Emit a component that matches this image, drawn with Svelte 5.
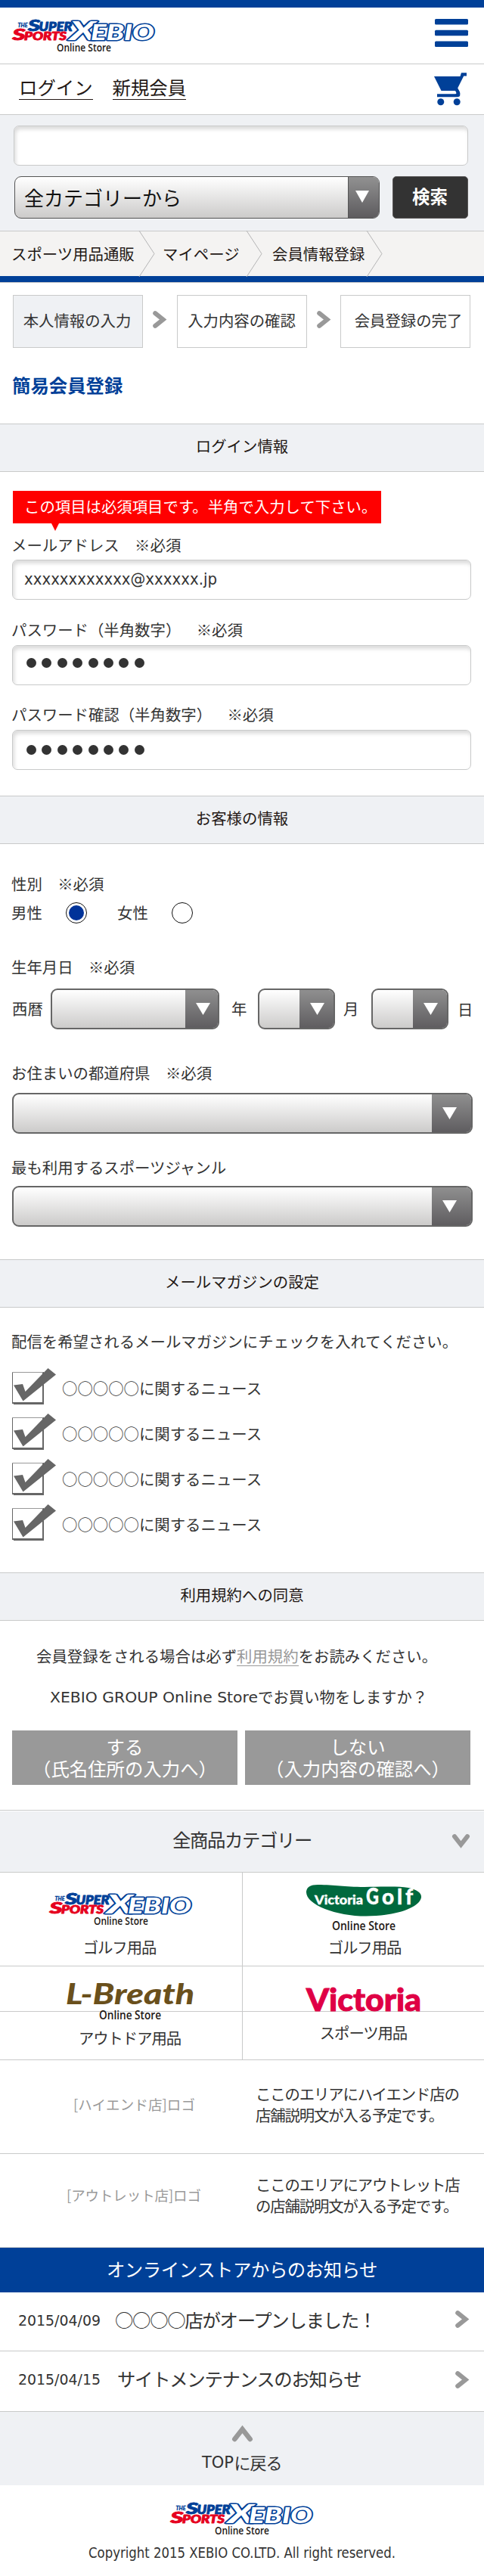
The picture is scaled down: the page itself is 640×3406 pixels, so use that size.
<script>
  const crumbs = [
    { label: 'スポーツ用品通販', width: 205 },
    { label: 'マイページ', width: 142 },
    { label: '会員情報登録', width: 159 },
  ];
  const steps = ['本人情報の入力', '入力内容の確認', '会員登録の完了'];
  const newsletters = [1, 2, 3, 4];
  const dots = [0, 1, 2, 3, 4, 5, 6, 7];
  const stores = [
    { logo: '[ハイエンド店]ロゴ', lines: ['ここのエリアにハイエンド店の', '店舗説明文が入る予定です。'], w: 161 },
    { logo: '[アウトレット店]ロゴ', lines: ['ここのエリアにアウトレット店', 'の店舗説明文が入る予定です。'], w: 178 },
  ];
</script>

{#snippet xebio()}
  <svg class="xebio" width="192" height="46" viewBox="0 0 192 46">
    <g font-family="Lato" font-weight="900" font-style="italic" stroke-linejoin="round">
      <text x="8.500" y="12" font-size="7" fill="#004098" stroke="#004098" stroke-width=".3" textLength="13" lengthAdjust="spacingAndGlyphs">THE</text>
      <g fill="#004098" stroke="#004098" stroke-width="1">
        <text x="22" y="16.500" font-size="21" textLength="16" lengthAdjust="spacingAndGlyphs">S</text>
        <text x="36.500" y="16.500" font-size="16.500" textLength="44" lengthAdjust="spacingAndGlyphs">UPER</text>
      </g>
      <g fill="#e60020" stroke="#e60020" stroke-width="1">
        <text x="1.500" y="29.300" font-size="20" textLength="17" lengthAdjust="spacingAndGlyphs">S</text>
        <text x="17" y="29.300" font-size="15" textLength="56" lengthAdjust="spacingAndGlyphs">PORTS</text>
      </g>
      <g fill="#fff" stroke="#004098" stroke-width="3" paint-order="stroke">
        <text x="77" y="28.500" font-size="34" textLength="35" lengthAdjust="spacingAndGlyphs">X</text>
        <text x="105" y="28.500" font-size="29" textLength="84" lengthAdjust="spacingAndGlyphs">EBIO</text>
      </g>
    </g>
    <text x="60" y="43.500" font-family="Open Sans" font-weight="600" font-size="13.500" fill="#231815" textLength="72" lengthAdjust="spacingAndGlyphs">Online Store</text>
  </svg>
{/snippet}

{#snippet arrow()}
  <svg class="arrow" width="18" height="23" viewBox="0 0 18 23">
    <path d="M3.2 3.2 L13.6 11.5 L3.2 19.8" fill="none" stroke="#999" stroke-width="6" stroke-linecap="round" />
  </svg>
{/snippet}

{#snippet select(width, handle, tri)}
  <div class="select" style="width:{width}px">
    <div class="handle" style="width:{handle}px;padding-left:{tri}px">
      <svg width="19" height="16" viewBox="0 0 19 16"><path d="M0 0H19L9.5 16Z" fill="#fff" /></svg>
    </div>
  </div>
{/snippet}

{#snippet latin(text, width, size)}
  <svg class="latin" width={width} height="30" viewBox="0 0 {width} 30">
    <text x="0" y="22" font-size={size} textLength={width} lengthAdjust="spacingAndGlyphs">{text}</text>
  </svg>
{/snippet}

<div class="page">
  <div class="topbar"></div>
  <header>
    {@render xebio()}
    <svg width="44" height="37" viewBox="0 0 44 37" fill="#004098">
      <rect width="44" height="7.5" rx="1.5" /><rect y="14.8" width="44" height="7.5" rx="1.5" /><rect y="29.5" width="44" height="7.5" rx="1.5" />
    </svg>
  </header>
  <nav>
    <a class="first">ログイン</a>
    <a>新規会員</a>
    <svg width="44" height="44" viewBox="0 0 44 44">
      <path d="M0 5H34.5L36 0.3H43V4.5H39.2L31.2 20.5L34 25.5Q35.8 32.2 31 32.2H4V28.2H28.2Q30 28.2 29.2 26L28 24H9.5Z" fill="#004098" />
      <circle cx="8.8" cy="38.8" r="4.5" fill="#004098" /><circle cx="30.2" cy="38.8" r="4.5" fill="#004098" />
    </svg>
  </nav>
  <div class="search">
    <div class="input wide"></div>
    <div class="search-row">
      <div class="select cat">
        <span>全カテゴリーから</span>
        <div class="handle">
          <svg width="18" height="16" viewBox="0 0 18 16"><path d="M0 0H18L9 16Z" fill="#fff" /></svg>
        </div>
      </div>
      <div class="go">検索</div>
    </div>
  </div>
  <div class="crumbs">
    {#each crumbs as c, i}
      <div class="crumb" class:lead={i === 0} style="width:{c.width}px">
        <span>{c.label}</span>
        <svg width="21" height="59" viewBox="0 0 21 59"><path d="M0 -1L20 29.5L0 60" fill="none" stroke="#b5b5b6" stroke-width="1" /></svg>
      </div>
    {/each}
  </div>
  <div class="bluebar"></div>

  <section class="intro">
    <div class="steps">
      {#each steps as s, i}
        {#if i > 0}{@render arrow()}{/if}
        <div class="step" class:on={i === 0} class:shift={i === 2}>{s}</div>
      {/each}
    </div>
    <h1>簡易会員登録</h1>
  </section>

  <h2>ログイン情報</h2>
  <section class="login">
    <div class="error">この項目は必須項目です。半角で入力して下さい。</div>
    <p class="label a">メールアドレス　※必須</p>
    <div class="input mail">{@render latin('xxxxxxxxxxxx@xxxxxx.jp', 255, 20.4)}</div>
    <p class="label b">パスワード（半角数字）　※必須</p>
    <div class="input pw">{#each dots as d}<i></i>{/each}</div>
    <p class="label c">パスワード確認（半角数字）　※必須</p>
    <div class="input pw low">{#each dots as d}<i></i>{/each}</div>
  </section>

  <h2>お客様の情報</h2>
  <section class="customer">
    <p class="label d">性別　※必須</p>
    <div class="genders">
      <span>男性</span><b class="radio on"></b>
      <span>女性</span><b class="radio"></b>
    </div>
    <p class="label e">生年月日　※必須</p>
    <div class="birth">
      <span class="era">西暦</span>{@render select(223, 45, 14)}
      <span class="year">年</span>{@render select(102, 47, 14)}
      <span class="month">月</span>{@render select(102, 47, 14)}
      <span class="day">日</span>
    </div>
    <p class="label f">お住まいの都道府県　※必須</p>
    {@render select(609, 54, 14)}
    <p class="label g">最も利用するスポーツジャンル</p>
    {@render select(609, 54, 14)}
  </section>

  <h2>メールマガジンの設定</h2>
  <section class="mailmag">
    <p class="label">配信を希望されるメールマガジンにチェックを入れてください。</p>
    <div class="checks">
      {#each newsletters as n}
        <div class="check">
          <svg width="59" height="50" viewBox="0 0 59 50">
            <path d="M0 6H42V49H2V48H0Z" fill="#666" /><path d="M0 6H41V7H0Z" fill="#999" /><path d="M1 7H40V46H1Z" fill="#fff" />
            <path d="M2 23.5L14 22L17.5 32L47.5 1L58 9.5L14.5 44.5Z" fill="#666" />
          </svg>
          <span>○○○○○に関するニュース</span>
        </div>
      {/each}
    </div>
  </section>

  <h2>利用規約への同意</h2>
  <section class="agree">
    <p class="terms">会員登録をされる場合は必ず<a>利用規約</a>をお読みください。</p>
    <p class="shop">{@render latin('XEBIO GROUP Online Store', 275, 20)}でお買い物をしますか？</p>
    <div class="buttons">
      <div>する<br />（氏名住所の入力へ）</div>
      <div>しない<br />（入力内容の確認へ）</div>
    </div>
  </section>

  <div class="category">
    <span>全商品カテゴリー</span>
    <svg width="23" height="19" viewBox="0 0 23 19"><path d="M3 3.2L11.5 14L20 3.2" fill="none" stroke="#999" stroke-width="6" stroke-linecap="round" /></svg>
  </div>
  <div class="brands">
    <div class="brand one">
      {@render xebio()}
      <span>ゴルフ用品</span>
    </div>
    <div class="brand two">
      <svg width="154" height="64" viewBox="0 0 154 64">
        <path d="M1 9Q2 0 16 0C40 0 50 3 78 3C100 3 120 1.5 136 4Q154 8 153 17C150 31 118 41.500 80 41.500C40 41.500 0 26 1 9Z" fill="#00693e" />
        <g fill="#fff" font-family="Lato" font-weight="900" stroke="#fff" stroke-width=".4">
          <text x="12" y="26" font-size="17" textLength="64" lengthAdjust="spacingAndGlyphs">Victoria</text>
          <text x="80" y="26.300" font-size="30" textLength="17" lengthAdjust="spacingAndGlyphs">G</text>
          <text x="101" y="26.300" font-size="29" letter-spacing="4" textLength="45" lengthAdjust="spacingAndGlyphs">olf</text>
        </g>
        <text x="35" y="59.500" font-family="Open Sans" font-weight="600" font-size="15.500" fill="#231815" textLength="84" lengthAdjust="spacingAndGlyphs">Online Store</text>
      </svg>
      <span>ゴルフ用品</span>
    </div>
    <div class="brand three">
      <svg width="172" height="54" viewBox="0 0 172 54">
        <text x="0" y="31" font-family="Lato" font-style="italic" font-weight="900" font-size="38" fill="#6a501c" textLength="170" lengthAdjust="spacingAndGlyphs">L-Breath</text>
        <text x="44" y="51.300" font-family="Open Sans" font-weight="600" font-size="15.500" fill="#231815" textLength="82" lengthAdjust="spacingAndGlyphs">Online Store</text>
      </svg>
      <span>アウトドア用品</span>
    </div>
    <div class="brand four">
      <svg width="154" height="34" viewBox="0 0 154 34">
        <text x="1" y="32" font-family="Lato" font-weight="900" font-size="41" fill="#df0045" stroke="#df0045" stroke-width="1" textLength="152" lengthAdjust="spacingAndGlyphs">Victoria</text>
      </svg>
      <span>スポーツ用品</span>
    </div>
  </div>
  {#each stores as s, i}
    <div class="store" class:up={i === 1}>
      <div class="ph"><svg width={s.w} height="30"><text x="0" y="22" textLength={s.w} lengthAdjust="spacing">{s.logo}</text></svg></div>
      <div class="desc">{s.lines[0]}<br />{s.lines[1]}</div>
    </div>
  {/each}

  <div class="newshead">オンラインストアからのお知らせ</div>
  <div class="news">
    <time>{@render latin('2015/04/09', 109, 20)}</time><span>○○○○店がオープンしました！</span>{@render arrow()}
  </div>
  <div class="news second">
    <time>{@render latin('2015/04/15', 109, 20)}</time><span>サイトメンテナンスのお知らせ</span>{@render arrow()}
  </div>
  <div class="totop">
    <svg width="27" height="22" viewBox="0 0 27 22"><path d="M3.300 18L13.500 5L23.700 18" fill="none" stroke="#999" stroke-width="6.500" stroke-linecap="round" /></svg>
    <div>{@render latin('TOP', 42, 21)}に戻る</div>
  </div>
  <footer>
    {@render xebio()}
    <div class="copy">{@render latin('Copyright 2015 XEBIO CO.LTD. All right reserved.', 406, 20)}</div>
  </footer>
</div>

<style>
  :global(body) { margin: 0; background: #fff; }
  .page, .page * { box-sizing: border-box; }
  .page { width: 640px; height: 3406px; font: 20.4px/30px 'Noto Sans CJK JP', sans-serif; color: #333; overflow: hidden; text-spacing-trim: space-all; }
  svg { display: block; flex: none; overflow: visible; }
  p, h1, h2 { margin: 0; font-weight: 400; font-size: inherit; white-space: nowrap; }
  span, a { white-space: nowrap; }
  .latin text { font-family: 'DejaVu Sans Condensed', 'DejaVu Sans', sans-serif; font-stretch: condensed; fill: #333; letter-spacing: 0; }
  .topbar { height: 10px; background: #004098; }
  header { height: 75px; border-bottom: 1px solid #c9caca; display: flex; justify-content: space-between; padding: 14px 21px 0 15px; }
  header > svg:last-child { margin-top: 1px; }
  nav { height: 67px; border-bottom: 1px solid #c9caca; display: flex; padding: 11px 22px 0 25px; color: #231815; font-size: 24.4px; line-height: 40px; }
  nav a { height: 36px; border-bottom: 1px solid #231815; line-height: 38px; }
  nav .first { margin-right: 26px; }
  nav svg { margin-left: auto; }
  .search { height: 154px; background: #eff1f4; border-bottom: 1px solid #c9caca; padding: 14px 21px 0 18px; }
  .input { height: 53px; border: 1px solid #c9caca; border-radius: 7px; background: #fff; box-shadow: inset 2px 4px 5px rgba(0, 0, 0, .14); }
  .search-row { display: flex; justify-content: space-between; margin-top: 14px; padding-left: 1px; }
  .select { height: 54px; border: 2px solid #666; border-radius: 9px; background: linear-gradient(#fff, #cccbca); display: flex; justify-content: flex-end; overflow: hidden; flex: none; }
  .handle { background: linear-gradient(#919191, #5d5b5e); margin: -2px; height: 54px; padding-top: 19px; flex: none; }
  .cat { width: 483px; height: 56px; border-width: 1px; border-color: #555; justify-content: space-between; }
  .cat span { color: #111; font-size: 26px; line-height: 53px; padding-left: 12px; }
  .cat .handle { width: 41px; height: 54px; margin: 0; border-left: 1px solid #555; padding: 18px 0 0 9px; }
  .go { width: 100px; height: 56px; border-radius: 5px; background: #333; border: 1px solid #595757; color: #fff; font-weight: 700; font-size: 23.5px; line-height: 51px; text-align: center; padding-right: 1px; }
  .crumbs { height: 59px; background: #f4f3f2; display: flex; color: #231815; }
  .crumb { display: flex; justify-content: space-between; line-height: 58px; padding-left: 13px; }
  .crumb.lead { padding-left: 15px; }
  .crumb span { width: 0; }
  .crumb:nth-child(2) { padding-left: 10px; }
  .bluebar { height: 9px; background: #004098; border-bottom: 1px solid #c9caca; }

  .intro { height: 186px; padding: 16px 18px 0 17px; }
  .steps { display: flex; align-items: flex-start; justify-content: space-between; }
  .steps :global(.arrow) { margin-top: 21px; }
  .step { width: 172px; height: 70px; border: 1px solid #c9caca; text-align: center; line-height: 65px; white-space: nowrap; }
  .step.on { background: #eff1f4; padding-right: 2px; }
  .step.shift { padding-left: 8px; }
  h1 { margin: 34px 0 0 -1px; font-size: 24.4px; font-weight: 700; color: #004098; }
  h2 { height: 64px; background: #eff1f4; border: solid #c9caca; border-width: 1px 0; text-align: center; line-height: 57px; color: #231815; }

  .login { height: 428px; padding: 25px 17px 0 16px; }
  .label { text-indent: -1px; }
  .error { position: relative; width: 487px; height: 43px; margin-left: 1px; background: #f00; color: #fff; line-height: 41px; padding-left: 15px; white-space: nowrap; }
  .error::after { content: ''; position: absolute; left: 51px; top: 43px; border: solid transparent; border-width: 10px 5px 0; border-top-color: #f00; }
  .a { margin: 13px 0 5px; }
  .b { margin: 24px 0 6px; }
  .c { margin: 23px 0 6px; }
  .mail { padding: 10px 0 0 15px; }
  .mail :global(.latin text) { font-family: 'DejaVu Sans', sans-serif; font-stretch: normal; }
  .pw { display: flex; gap: 7.4px; padding: 16px 0 0 18px; }
  .pw i { width: 13px; height: 13px; border-radius: 50%; background: #333; }
  .pw.low { padding-top: 19px; }

  .customer { height: 549px; padding: 37px 0 0 16px; }
  .genders { display: flex; align-items: center; height: 32px; margin-top: 8px; padding-bottom: 1px; margin-left: -1px; }
  .genders span { width: 72px; line-height: 30px; position: relative; top: -1px; }
  .radio { width: 28px; height: 28px; border: 1px solid #111; border-radius: 50%; margin-right: 40px; display: grid; place-items: center; }
  .radio.on::after { content: ''; width: 20px; height: 20px; border-radius: 50%; background: #039; }
  .e { margin: 40px 0 14px; }
  .birth { display: flex; line-height: 52px; }
  .era { width: 51px; }
  .year { width: 51px; padding-left: 16px; }
  .month { width: 48px; padding-left: 11px; }
  .day { padding-left: 12px; line-height: 54px; }
  .f { margin: 42px 0 12px; }
  .g { margin: 29px 0 10px; }

  .mailmag { height: 350px; padding: 29px 0 0 16px; }
  .checks { margin-top: 17px; }
  .check { height: 60px; display: flex; align-items: center; line-height: 58px; }
  .check svg { margin: 0 7px 4px 0; }
  .check span { margin-top: -1px; }

  .agree { height: 250px; padding-top: 31px; }
  .terms { padding-left: 48px; }
  .terms a { color: #999; display: inline-block; height: 29px; border-bottom: 1px solid #999; vertical-align: top; }
  .shop { padding-left: 66px; margin-top: 24px; display: flex; }
  .shop :global(.latin text) { font-family: 'DejaVu Sans', sans-serif; font-stretch: normal; }
  .shop :global(.latin) { margin-top: 1px; }
  .buttons { display: flex; gap: 10px; margin: 29px 0 0 16px; }
  .buttons div { width: 298px; height: 72px; background: #999; color: #fff; text-align: center; font-size: 24.4px; line-height: 29px; padding-top: 6px; }

  .category { height: 83px; border: solid #c9caca; border-width: 1px 0; box-shadow: inset 0 1px #fff; background: #eff1f4; display: flex; justify-content: flex-end; padding: 31px 19px 0 0; }
  .category span { font-size: 24.4px; letter-spacing: -1.4px; line-height: 75px; margin: -31px 186px 0 0; }
  .brands { display: grid; grid-template-columns: 321px 319px; position: relative; }
  .brands::before { content: ''; position: absolute; z-index: -1; left: 0; right: 0; top: 183px; height: 1px; background: #c9caca; }
  .brand { height: 124px; border-bottom: 1px solid #c9caca; display: flex; flex-direction: column; align-items: center; }
  .brand span { letter-spacing: -1.1px; line-height: 30px; }
  .one, .three { border-right: 1px solid #c9caca; }
  .one { padding-top: 25px; }
  .one span { margin: 12px 4px 0 0; }
  .two { padding-top: 16px; }
  .two span { margin: 3px 0 0 3px; }
  .three { padding: 19px 0 0 25px; }
  .three span { margin: 6px 2px 0 0; }
  .four { padding-top: 27px; }
  .four span { margin-top: 11px; }
  .store { height: 124px; border-bottom: 1px solid #c9caca; display: flex; }
  .ph { width: 338px; padding: 44px 0 0 16px; display: flex; justify-content: center; }
  .ph text { font-size: 18.5px; fill: #999; }
  .desc { padding-top: 30px; line-height: 28px; letter-spacing: -1.15px; white-space: nowrap; }
  .up .ph { padding-top: 40px; }
  .up .desc { padding-top: 26px; }
  .newshead { height: 59px; background: #004098; color: #fff; text-align: center; font-size: 24.4px; letter-spacing: -.45px; line-height: 56px; }
  .news { height: 78px; border-bottom: 1px solid #c9caca; display: flex; padding: 0 20px 0 24px; line-height: 71px; }
  .news time { width: 128px; padding-top: 22px; }
  .news span { font-size: 24.4px; letter-spacing: -1.3px; }
  .news :global(.arrow) { margin: 24px 0 0 auto; }
  .second { height: 80px; }
  .second span { padding-left: 3px; }
  .second :global(.arrow) { margin-top: 26px; }
  .totop { height: 97px; background: #eff1f4; display: flex; flex-direction: column; align-items: center; padding-top: 18px; font-size: 22px; letter-spacing: -1px; }
  .totop div { margin-top: 11px; display: flex; }
  .totop :global(.latin) { margin-top: 1px; }
  footer { height: 120px; padding-top: 21px; display: flex; flex-direction: column; align-items: center; }
  .copy { margin-top: 7px; }
</style>
